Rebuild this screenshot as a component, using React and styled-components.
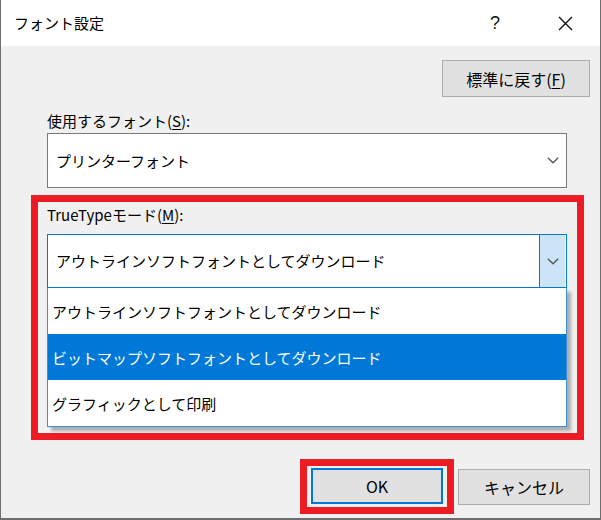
import React from 'react'
import styled, { createGlobalStyle } from 'styled-components'

const GlobalStyle = createGlobalStyle`
    body {
        margin: 0;
        background: #ffffff;
        font-family: "Noto Sans CJK JP", "Noto Sans", sans-serif;
        color: #000000;
    }
`

const StWindow = styled.div`
    width: 601px;
    height: 520px;
    box-sizing: border-box;
    border: 1px solid #6e6e6e;
    border-top: none;
    border-bottom-width: 2px;
    background: #f0f0f0;
    display: flex;
    flex-direction: column;
    overflow: hidden;
`

const StTitleBar = styled.div`
    height: 46px;
    flex-shrink: 0;
    background: #ffffff;
    display: flex;
    align-items: center;
    padding-left: 13px;
`

const StTitle = styled.div`
    flex: 1;
    font-size: 15px;
    line-height: 20px;
`

const StTitleBtn = styled.div`
    width: 70px;
    height: 46px;
    display: flex;
    align-items: center;
    justify-content: center;
    font-size: 18px;
    font-family: "Liberation Sans", sans-serif;
    color: #111;
`

const StBody = styled.div`
    display: flex;
    flex-direction: column;
    padding: 14px 10px 0 10px;
`

const StTopRow = styled.div`
    display: flex;
    justify-content: flex-end;
`

const SButton = styled.button`
    width: ${(p) => p.$w}px;
    height: ${(p) => p.$h}px;
    box-sizing: border-box;
    border: ${(p) => (p.$focus ? '2px solid #0078d7' : '1px solid #adadad')};
    background: #e1e1e1;
    font-family: "Noto Sans CJK JP", sans-serif;
    font-size: 16px;
    line-height: 20px;
    color: #000;
    padding: 0;
    display: flex;
    align-items: center;
    justify-content: center;
`

const StLabel = styled.div`
    font-size: 15px;
    line-height: 20px;
    margin-top: ${(p) => p.$mt}px;
`

const StUnderline = styled.span`
    text-decoration: underline;
    text-underline-offset: 2px;
`

const StField = styled.div`
    display: flex;
    flex-direction: column;
    margin: 0 23px 0 36px;
`

const StCombo = styled.div`
    height: ${(p) => p.$h}px;
    box-sizing: border-box;
    margin-top: ${(p) => p.$mt}px;
    background: #ffffff;
    border: 1px solid ${(p) => (p.$open ? '#0078d7' : '#7a7a7a')};
    display: flex;
    align-items: center;
`

const StComboText = styled.div`
    flex: 1;
    padding-left: 8px;
    font-size: 15px;
    line-height: 20px;
`

const StArrow = styled.div`
    width: 25px;
    align-self: stretch;
    display: flex;
    align-items: center;
    justify-content: center;
    background: ${(p) => (p.$open ? '#cce4f7' : 'transparent')};
    border-left: 1px solid ${(p) => (p.$open ? '#0078d7' : 'transparent')};
    margin-right: 1px;
`

const StRedBox = styled.div`
    border: 7px solid #ed1c24;
    margin: ${(p) => p.$margin};
    padding: ${(p) => p.$pad};
    display: flex;
    flex-direction: column;
`

const StList = styled.div`
    background: #ffffff;
    border: 1px solid #3c8fd6;
    border-top: none;
    box-shadow: 4px 4px 3px rgba(0, 0, 0, 0.28);
    display: flex;
    flex-direction: column;
`

const StItem = styled.div`
    height: 46px;
    display: flex;
    align-items: center;
    padding-left: 4px;
    font-size: 15px;
    background: ${(p) => (p.$selected ? '#0078d7' : '#ffffff')};
    color: ${(p) => (p.$selected ? '#ffffff' : '#000000')};
`

const StBottomRow = styled.div`
    display: flex;
    justify-content: flex-end;
    align-items: center;
    gap: 4px;
    margin-top: 19px;
`

const Chevron = () => (
    <svg width="12" height="7" viewBox="0 0 12 7">
        <path d="M0.8 0.8 L6 5.8 L11.2 0.8" fill="none" stroke="#555" strokeWidth="1.3" />
    </svg>
)

const CloseIcon = () => (
    <svg width="15" height="15" viewBox="0 0 15 15">
        <path d="M1 1 L14 14 M14 1 L1 14" stroke="#111" strokeWidth="1.4" />
    </svg>
)

const items = [
    'アウトラインソフトフォントとしてダウンロード',
    'ビットマップソフトフォントとしてダウンロード',
    'グラフィックとして印刷',
]

const App = () => {
    return (
        <StWindow>
            <GlobalStyle />
            <StTitleBar>
                <StTitle>フォント設定</StTitle>
                <StTitleBtn>?</StTitleBtn>
                <StTitleBtn><CloseIcon /></StTitleBtn>
            </StTitleBar>
            <StBody>
                <StTopRow>
                    <SButton $w={148} $h={37}>標準に戻す(<StUnderline>F</StUnderline>)</SButton>
                </StTopRow>
                <StField>
                    <StLabel $mt={14}>使用するフォント(<StUnderline>S</StUnderline>):</StLabel>
                    <StCombo $h={55} $mt={2}>
                        <StComboText>プリンターフォント</StComboText>
                        <StArrow><Chevron /></StArrow>
                    </StCombo>
                </StField>
                <StRedBox $margin="7px 6px 0 20px" $pad="0 10px 6px 9px">
                    <StLabel $mt={3}>TrueTypeモード(<StUnderline>M</StUnderline>):</StLabel>
                    <StCombo $h={54} $mt={9} $open>
                        <StComboText>{items[0]}</StComboText>
                        <StArrow $open><Chevron /></StArrow>
                    </StCombo>
                    <StList>
                        {items.map((t, i) => (
                            <StItem key={t} $selected={i === 1}>{t}</StItem>
                        ))}
                    </StList>
                </StRedBox>
                <StBottomRow>
                    <StRedBox $margin="0" $pad="2px 4px 3px 4px">
                        <SButton $w={132} $h={36} $focus>OK</SButton>
                    </StRedBox>
                    <SButton $w={132} $h={36}>キャンセル</SButton>
                </StBottomRow>
            </StBody>
        </StWindow>
    )
}
export default App
